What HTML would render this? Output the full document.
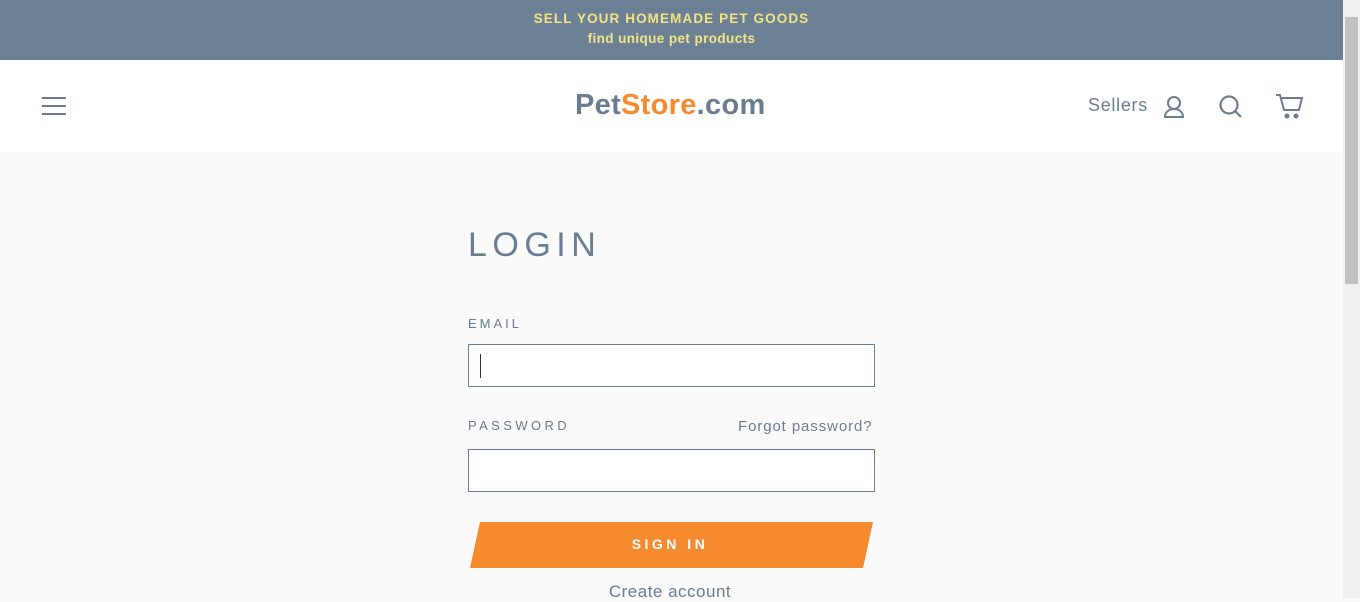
<!DOCTYPE html>
<html><head><style>
*{margin:0;padding:0;box-sizing:border-box}
body{width:1360px;height:598px;overflow:hidden;font-family:"Liberation Sans",sans-serif;background:#fafafa;position:relative;color:#6b7c91}
.top{position:absolute;left:0;top:0;width:1343px;height:60px;background:#6c8196;text-align:center;color:#f3e484;font-weight:bold;font-size:13.5px;letter-spacing:1.1px}
.top div{position:absolute;width:100%}
.hdr{position:absolute;left:0;top:60px;width:1343px;height:92px;background:#fff}
.sb{position:absolute;left:1343px;top:0;width:17px;height:598px;background:#f1f1f1}
.sb i{position:absolute;left:2px;top:17px;width:13px;height:267px;background:#c1c1c1}
.lbl{position:absolute;font-size:13px;letter-spacing:3px}
.inp{position:absolute;left:468px;width:407px;height:43px;border:1px solid #6b7c91;background:#fff}
</style></head><body>
<div class="top"><div style="top:11px">SELL YOUR HOMEMADE PET GOODS</div><div style="top:31px;letter-spacing:.4px">find unique pet products</div></div>
<div class="hdr">
<svg style="position:absolute;left:42px;top:36px" width="25" height="20"><g stroke="#6b7c91" stroke-width="2"><line x1="0" y1="2" x2="24" y2="2"/><line x1="0" y1="10" x2="24" y2="10"/><line x1="0" y1="18" x2="24" y2="18"/></g></svg>
<div style="position:absolute;left:575px;top:29px;font-size:29px;font-weight:bold;letter-spacing:0.3px;color:#6b7c91">Pet<span style="color:#f58a2f">Store</span>.com</div>
<div style="position:absolute;left:1088px;top:35px;font-size:18px;letter-spacing:.7px">Sellers</div>
<svg style="position:absolute;left:1162px;top:34px" width="26" height="26" fill="none" stroke="#6b7c91" stroke-width="2"><circle cx="12" cy="9" r="6"/><path d="M3 23h18c0-5-4-8-9-8s-9 3-9 8z"/></svg>
<svg style="position:absolute;left:1218px;top:34px" width="26" height="26" fill="none" stroke="#6b7c91" stroke-width="2.2"><circle cx="11" cy="11" r="8.5"/><line x1="17" y1="17" x2="23" y2="23"/></svg>
<svg style="position:absolute;left:1275px;top:33px" width="30" height="28" fill="none" stroke="#6b7c91" stroke-width="2"><path d="M1 2h4l4 15h15l3-12H7"/><circle cx="12" cy="23" r="1.5" fill="#6b7c91"/><circle cx="21" cy="23" r="1.5" fill="#6b7c91"/></svg>
</div>
<div style="position:absolute;left:468px;top:226px;font-size:34px;letter-spacing:5.5px">LOGIN</div>
<div class="lbl" style="left:468px;top:316px">EMAIL</div>
<div class="inp" style="top:344px"><div style="position:absolute;left:11px;top:9px;width:1px;height:24px;background:#333"></div></div>
<div class="lbl" style="left:468px;top:418px;letter-spacing:3.4px">PASSWORD</div>
<div style="position:absolute;left:738px;top:418px;font-size:15px;letter-spacing:.9px">Forgot password?</div>
<div class="inp" style="top:449px"></div>
<svg style="position:absolute;left:470px;top:522px" width="404" height="46"><polygon points="10,0 403,0 393,46 0,46" fill="#f58a2f"/></svg>
<div style="position:absolute;left:470px;top:536px;width:400px;text-align:center;color:#fff;font-weight:bold;font-size:14px;letter-spacing:3.5px">SIGN IN</div>
<div style="position:absolute;left:470px;top:582px;width:400px;text-align:center;font-size:17px;letter-spacing:.5px">Create account</div>
<div class="sb"><i></i></div>
</body></html>
